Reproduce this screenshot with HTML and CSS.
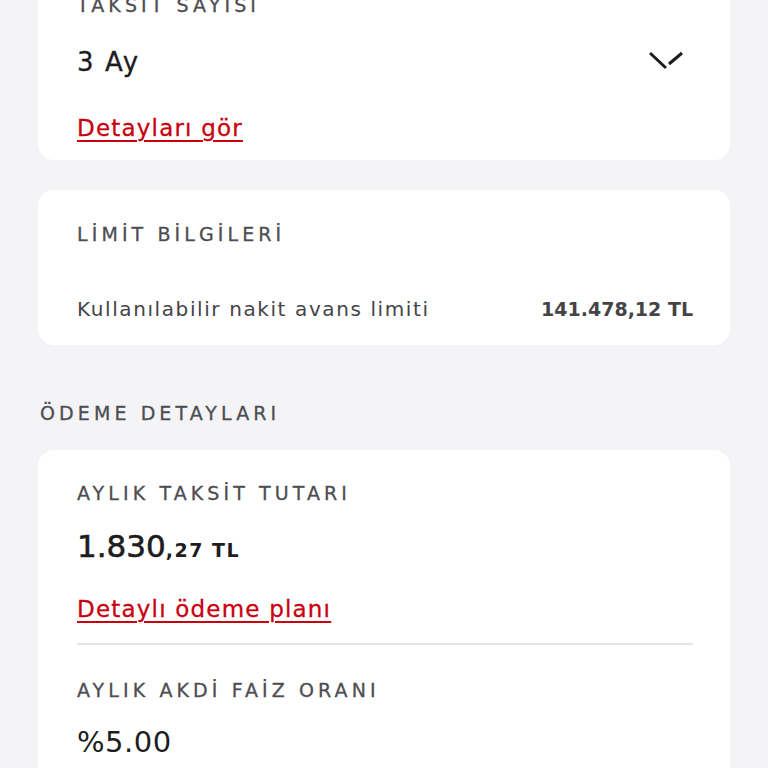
FILE: index.html
```html
<!DOCTYPE html>
<html lang="tr">
<head>
  <meta charset="UTF-8">
  <meta name="viewport" content="width=device-width, initial-scale=1.0">
  <title>Nakit Avans</title>
  <link rel="stylesheet" href="styles.css">
</head>
<body>
  <div class="page">
    <!-- Taksit secimi -->
    <div class="card card-installment">
      <div class="label">TAKSİT SAYISI</div>
      <div class="select-row">
        <span class="select-value">3 Ay</span>
        <svg class="chevron" width="36" height="24" viewBox="0 0 36 24">
          <line x1="2" y1="3" x2="18" y2="18" />
          <line x1="21" y1="14" x2="34" y2="3" />
        </svg>
      </div>
      <a class="link link-details">Detayları gör</a>
    </div>

    <!-- Limit bilgileri -->
    <div class="card card-limit">
      <div class="label">LİMİT BİLGİLERİ</div>
      <div class="info-row">
        <span class="info-name">Kullanılabilir nakit avans limiti</span>
        <span class="info-value">141.478,12 TL</span>
      </div>
    </div>

    <div class="section-title">ÖDEME DETAYLARI</div>

    <!-- Odeme detaylari -->
    <div class="card card-payment">
      <div class="label">AYLIK TAKSİT TUTARI</div>
      <div class="amount">1.830<span class="amount-small">,27 TL</span></div>
      <a class="link link-plan">Detaylı ödeme planı</a>
      <div class="divider"></div>
      <div class="label label-rate">AYLIK AKDİ FAİZ ORANI</div>
      <div class="rate">%5.00</div>
    </div>
  </div>
</body>
</html>
```

FILE: styles.css
```css
* {
  margin: 0;
  padding: 0;
  box-sizing: border-box;
}

body {
  font-family: 'DejaVu Sans', 'Noto Sans', sans-serif;
  background-color: #f4f4f6;
  color: #1d1d1f;
  overflow: hidden;
}

.page {
  padding: 0 38px;
}

.card {
  background: #fff;
  border-radius: 16px;
  padding: 0 37px 0 39px;
}

.label {
  font-size: 19px;
  line-height: 24px;
  letter-spacing: 4.1px;
  color: #4d4d52;
  -webkit-text-stroke: 0.3px #4d4d52;
}

/* first card is partly scrolled off the top */
.card-installment {
  margin-top: -40px;
  padding-top: 33px;
  padding-bottom: 18px;
}

.select-row {
  display: flex;
  justify-content: space-between;
  align-items: center;
  height: 40px;
  margin-top: 25px;
}

.select-value {
  font-size: 26px;
  letter-spacing: 1.6px;
  color: #1d1d1f;
  -webkit-text-stroke: 0.3px #1d1d1f;
}

.chevron {
  margin-right: 9px;
}

.chevron line {
  stroke: #1d1d1f;
  stroke-width: 3;
}

.link {
  display: inline-block;
  font-size: 23px;
  line-height: 28px;
  letter-spacing: 1.2px;
  color: #c8000f;
  -webkit-text-stroke: 0.3px #c8000f;
  text-decoration: underline;
  text-decoration-thickness: 2px;
  text-underline-offset: 4px;
  cursor: pointer;
}

.link-details {
  margin-top: 32px;
}

.card-limit {
  margin-top: 30px;
  padding-top: 32px;
  padding-bottom: 23px;
}

.info-row {
  display: flex;
  justify-content: space-between;
  align-items: center;
  height: 26px;
  margin-top: 50px;
  color: #444448;
}

.info-name {
  font-size: 20px;
  letter-spacing: 1.6px;
}

.info-value {
  font-size: 19px;
  font-weight: 700;
}

.section-title {
  margin-top: 56px;
  margin-bottom: 25px;
  padding-left: 2px;
  font-size: 19px;
  line-height: 24px;
  letter-spacing: 4.1px;
  color: #4d4d52;
  -webkit-text-stroke: 0.3px #4d4d52;
}

.card-payment {
  padding-top: 31px;
  padding-bottom: 40px;
  border-radius: 16px 16px 0 0;
}

.amount {
  margin-top: 21px;
  height: 40px;
  line-height: 40px;
  font-size: 31px;
  color: #1d1d1f;
  -webkit-text-stroke: 0.6px #1d1d1f;
}

.amount-small {
  font-size: 19px;
  font-weight: 700;
  letter-spacing: 1.5px;
  -webkit-text-stroke: 0;
}

.link-plan {
  margin-top: 29px;
}

.divider {
  height: 2px;
  margin-top: 20px;
  background: #e6e6e8;
}

.label-rate {
  margin-top: 33px;
}

.rate {
  margin-top: 20px;
  height: 40px;
  line-height: 40px;
  font-size: 29px;
  letter-spacing: 0.5px;
  color: #1d1d1f;
}
```
